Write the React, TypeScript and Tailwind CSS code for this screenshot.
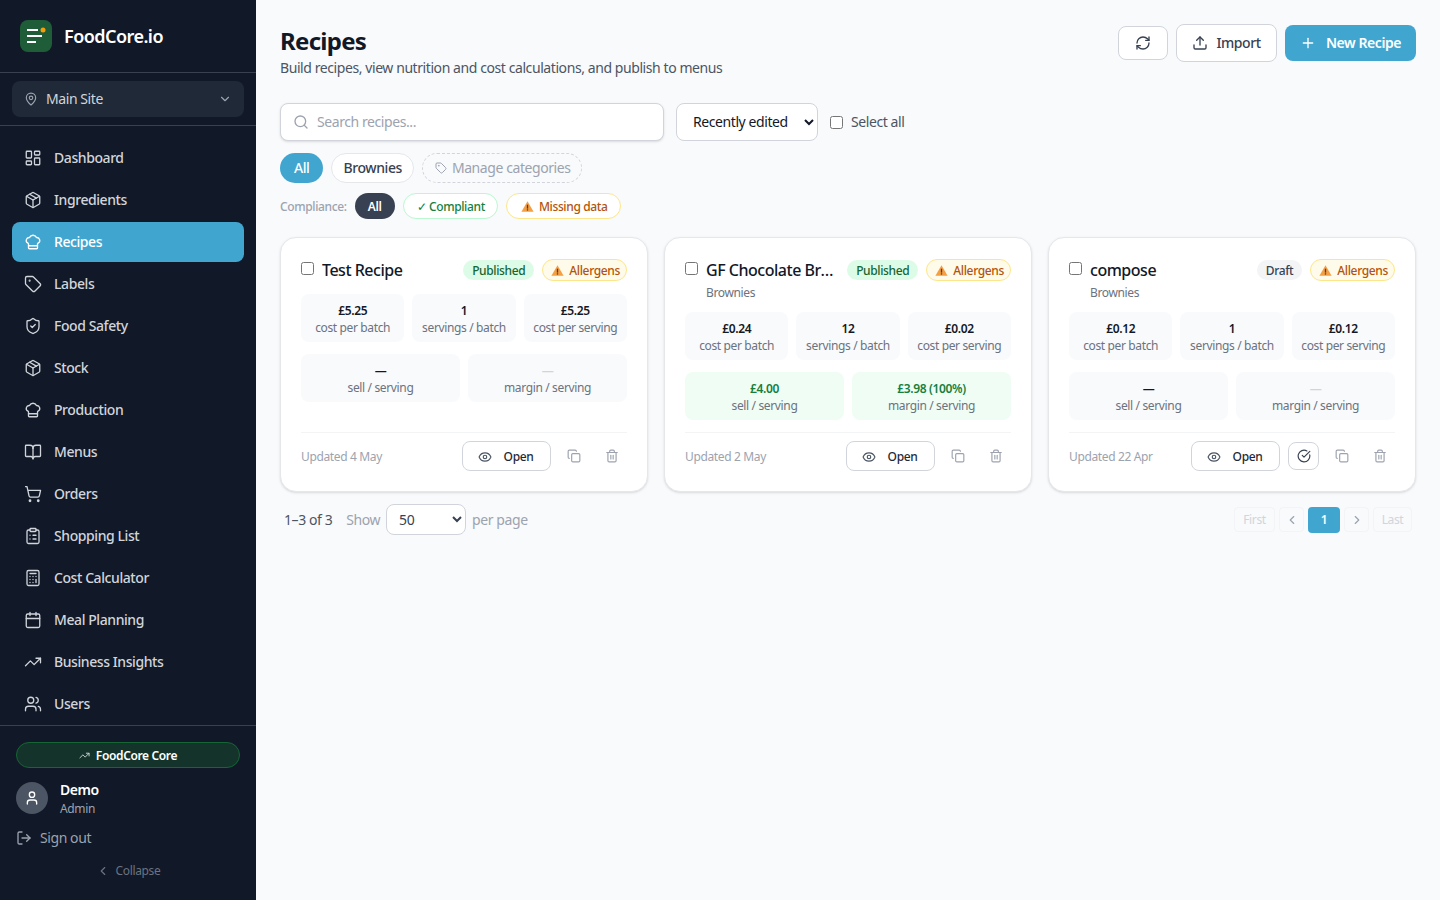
/**
 * Recipes Page - sidebar, filters and recipe cards
 */

import {
  BookOpen,
  Calculator,
  Calendar,
  ChefHat,
  ChevronDown,
  ChevronLeft,
  ChevronRight,
  CircleCheckBig,
  ClipboardList,
  Copy,
  Eye,
  LayoutDashboard,
  LogOut,
  MapPin,
  Package,
  Plus,
  RefreshCw,
  Search,
  ShieldCheck,
  ShoppingCart,
  Tag,
  Trash2,
  TrendingUp,
  Upload,
  User,
  Users,
} from 'lucide-react';

const navItems = [
  { label: 'Dashboard', icon: LayoutDashboard },
  { label: 'Ingredients', icon: Package },
  { label: 'Recipes', icon: ChefHat, active: true },
  { label: 'Labels', icon: Tag },
  { label: 'Food Safety', icon: ShieldCheck },
  { label: 'Stock', icon: Package },
  { label: 'Production', icon: ChefHat },
  { label: 'Menus', icon: BookOpen },
  { label: 'Orders', icon: ShoppingCart },
  { label: 'Shopping List', icon: ClipboardList },
  { label: 'Cost Calculator', icon: Calculator },
  { label: 'Meal Planning', icon: Calendar },
  { label: 'Business Insights', icon: TrendingUp },
  { label: 'Users', icon: Users },
];

const recipes = [
  {
    name: 'Test Recipe',
    status: 'Published',
    stats: [
      ['£5.25', 'cost per batch'],
      ['1', 'servings / batch'],
      ['£5.25', 'cost per serving'],
    ],
    updated: 'Updated 4 May',
  },
  {
    name: 'GF Chocolate Brownies',
    category: 'Brownies',
    status: 'Published',
    stats: [
      ['£0.24', 'cost per batch'],
      ['12', 'servings / batch'],
      ['£0.02', 'cost per serving'],
    ],
    sell: '£4.00',
    margin: '£3.98 (100%)',
    updated: 'Updated 2 May',
  },
  {
    name: 'compose',
    category: 'Brownies',
    status: 'Draft',
    stats: [
      ['£0.12', 'cost per batch'],
      ['1', 'servings / batch'],
      ['£0.12', 'cost per serving'],
    ],
    updated: 'Updated 22 Apr',
    canPublish: true,
  },
];

function WarningIcon() {
  return (
    <svg width="13" height="13" viewBox="0 0 16 16" className="shrink-0">
      <path d="M8 1.5 15.5 14.5H.5Z" fill="#f59e42" />
      <rect x="7.2" y="5.8" width="1.6" height="4.8" fill="#3f3f46" />
      <rect x="7.2" y="11.4" width="1.6" height="1.6" fill="#3f3f46" />
    </svg>
  );
}

function Logo() {
  return (
    <div className="flex h-8 w-8 items-center justify-center rounded-lg bg-[#1f5c38]">
      <svg width="32" height="32" viewBox="0 0 32 32">
        <rect x="7" y="9" width="11" height="2" fill="#fff" />
        <rect x="7" y="15" width="15" height="2" fill="#fff" />
        <rect x="7" y="21" width="9" height="2" fill="#fff" />
        <circle cx="23" cy="10" r="2.5" fill="#f59e0b" />
      </svg>
    </div>
  );
}

function Sidebar() {
  return (
    <aside className="flex h-screen w-64 shrink-0 flex-col bg-[#111827]">
      <div className="flex h-[73px] items-center gap-3 border-b border-[#374151] px-5 pb-[1px]">
        <Logo />
        <span className="text-lg font-semibold text-white">FoodCore.io</span>
      </div>

      {/* Site picker */}
      <div className="flex h-[53px] items-center border-b border-[#374151] px-3">
        <div className="flex h-9 w-full items-center gap-2 rounded-lg bg-[#1f2937] px-3 text-sm text-[#d1d5db]">
          <MapPin size={14} className="text-[#9ca3af]" />
          <span className="flex-1">Main Site</span>
          <ChevronDown size={14} className="text-[#9ca3af]" />
        </div>
      </div>

      <nav className="flex flex-col gap-0.5 px-3 pt-3">
        {navItems.map((item) => {
          const Icon = item.icon;
          return (
            <div
              key={item.label}
              className={`flex h-10 items-center gap-3 rounded-lg px-3 text-sm font-medium ${
                item.active ? 'bg-[#40a6d0] text-white' : 'text-[#d1d5db]'
              }`}
            >
              <Icon size={18} strokeWidth={1.75} />
              {item.label}
            </div>
          );
        })}
      </nav>

      <div className="mt-[1px] border-t border-[#374151] px-4 pt-4">
        <div className="flex h-[26px] items-center justify-center gap-1.5 rounded-full border border-[#166534] bg-[#14342b] pt-px text-xs font-semibold text-white">
          <TrendingUp size={11} className="text-[#d1d5db]" />
          FoodCore Core
        </div>

        <div className="mt-3.5 flex h-8 items-center gap-3">
          <div className="flex h-8 w-8 items-center justify-center rounded-full bg-[#4b5563] text-white">
            <User size={16} />
          </div>
          <div className="h-8">
            <div className="text-sm leading-4 font-semibold text-white">Demo</div>
            <div className="mt-[2px] pt-px text-xs leading-4 text-[#9ca3af]">Admin</div>
          </div>
        </div>

        <div className="mt-3.5 flex h-5 items-center gap-2 text-sm text-[#9ca3af]">
          <LogOut size={16} />
          Sign out
        </div>

        <div className="mt-3.5 flex h-4 items-center justify-center gap-1.5 pt-px text-xs text-[#6b7280]">
          <ChevronLeft size={14} />
          Collapse
        </div>
      </div>
    </aside>
  );
}

function Tile({ value, label, green, muted }: { value: string; label: string; green?: boolean; muted?: boolean }) {
  return (
    <div className={`h-12 rounded-lg pt-[9px] text-center text-xs leading-4 ${green ? 'bg-[#f0fdf4]' : 'bg-[#f9fafb]'}`}>
      <div
        className={`font-semibold ${
          green ? 'text-[#15803d]' : muted ? 'font-normal text-[#d1d5db]' : 'text-[#111827]'
        }`}
      >
        {value}
      </div>
      <div className="mt-px text-[#6b7280]">{label}</div>
    </div>
  );
}

function RecipeCard({ recipe }: { recipe: (typeof recipes)[number] }) {
  const priced = Boolean(recipe.sell);
  return (
    <div className="flex flex-col rounded-2xl border border-[#e5e7eb] bg-white p-5 shadow-sm">
      <div className="flex items-start">
        <input type="checkbox" className="mt-[4px] h-[13px] w-[13px] shrink-0" />
        <div className="ml-2 min-w-0 flex-1 truncate text-base leading-6 font-medium text-[#111827]">
          {recipe.name}
        </div>
        <div className="ml-3 flex shrink-0 items-center gap-2 pt-[1px]">
          <span
            className={`flex h-5 items-center rounded-full px-[9px] pt-px text-xs font-medium ${
              recipe.status === 'Published' ? 'bg-[#dcfce7] text-[#166534]' : 'bg-[#f3f4f6] text-[#374151]'
            }`}
          >
            {recipe.status}
          </span>
          <span className="flex h-[22px] items-center gap-[5px] rounded-full border border-[#fde68a] bg-[#fffbeb] pt-px pr-1.5 pl-2 text-xs font-medium text-[#b45309]">
            <WarningIcon />
            Allergens
          </span>
        </div>
      </div>

      {recipe.category && <div className="mt-[3px] h-[16px] pl-[21px] text-xs leading-4 text-[#6b7280]">{recipe.category}</div>}

      <div className={`${recipe.category ? 'mt-[11px]' : 'mt-3'} grid grid-cols-3 gap-2`}>
        {recipe.stats.map(([value, label]) => (
          <Tile key={label} value={value} label={label} />
        ))}
      </div>

      <div className="mt-3 grid grid-cols-2 gap-2">
        <Tile value={recipe.sell ?? '—'} label="sell / serving" green={priced} />
        <Tile value={recipe.margin ?? '—'} label="margin / serving" green={priced} muted={!priced} />
      </div>

      {/* Footer actions */}
      <div className="mt-auto flex items-center border-t border-[#f3f4f6] pt-2">
        <span className="flex-1 pt-px text-xs text-[#9ca3af]">{recipe.updated}</span>
        <button className="flex h-[30px] w-[89px] items-center justify-center gap-3 rounded-lg border border-[#d1d5db] bg-white pt-px pr-0.5 text-xs font-medium text-[#1f2937]">
          <Eye size={14} className="text-[#4b5563]" />
          Open
        </button>
        {recipe.canPublish && (
          <button className="ml-2 flex h-7 w-[31px] items-center justify-center rounded-lg border border-[#d1d5db] text-[#374151]">
            <CircleCheckBig size={14} />
          </button>
        )}
        <div className="ml-2 flex h-[30px] w-[30px] items-center justify-center text-[#9ca3af]">
          <Copy size={14} />
        </div>
        <div className="ml-2 flex h-[30px] w-[30px] items-center justify-center text-[#9ca3af]">
          <Trash2 size={14} />
        </div>
      </div>
    </div>
  );
}

function Pager() {
  const box = 'flex h-[25px] items-center justify-center rounded border border-[#f3f4f6] pt-px text-xs text-[#d1d5db]';
  return (
    <div className="flex items-center gap-1">
      <span className={`${box} w-[41px]`}>First</span>
      <span className={`${box} w-[25px]`}>
        <ChevronLeft size={14} className="text-[#9ca3af]" />
      </span>
      <span className="flex h-[26px] w-8 items-center justify-center rounded bg-[#40a6d0] pt-px text-xs font-semibold text-white">1</span>
      <span className={`${box} w-[25px]`}>
        <ChevronRight size={14} className="text-[#9ca3af]" />
      </span>
      <span className={`${box} w-[39px]`}>Last</span>
    </div>
  );
}

export default function App() {
  return (
    <div className="flex min-h-screen bg-[#f8fafc] font-['Noto_Sans',sans-serif] [&_*]:tracking-[-0.03em]">
      <Sidebar />

      <main className="flex-1 px-6 pt-6">
        <div className="flex items-start justify-between">
          <div>
            <h1 className="text-2xl leading-[34px] font-bold text-[#111827]">Recipes</h1>
            <p className="text-sm leading-5 text-[#4b5563]">Build recipes, view nutrition and cost calculations, and publish to menus</p>
          </div>
          <div className="flex h-[38px] items-center gap-2">
            <button className="flex h-[34px] w-[50px] items-center justify-center rounded-lg border border-[#d1d5db] bg-white text-[#374151]">
              <RefreshCw size={16} />
            </button>
            <button className="flex h-[38px] w-[101px] items-center justify-center gap-2 rounded-lg border border-[#d1d5db] bg-white text-sm font-medium text-[#374151]">
              <Upload size={16} />
              Import
            </button>
            <button className="flex h-9 w-[131px] items-center justify-center gap-2.5 rounded-lg bg-[#40a6d0] text-sm font-semibold text-white">
              <Plus size={16} />
              New Recipe
            </button>
          </div>
        </div>

        {/* Search and sort */}
        <div className="mt-[25px] flex items-center gap-3">
          <div className="flex h-[38px] w-[384px] items-center gap-2 rounded-lg border border-[#d1d5db] bg-white px-3 shadow-sm">
            <Search size={16} className="shrink-0 text-[#9ca3af]" />
            <input placeholder="Search recipes..." className="w-full text-sm outline-none placeholder:text-[#9ca3af]" />
          </div>
          <select
            defaultValue="edited"
            className="h-[38px] w-[142px] rounded-lg border border-[#d1d5db] bg-white pb-px pl-3 text-sm text-[#111827]"
          >
            <option value="edited">Recently edited</option>
          </select>
          <label className="flex items-center gap-2 text-sm text-[#4b5563]">
            <input type="checkbox" className="h-[13px] w-[13px]" />
            Select all
          </label>
        </div>

        {/* Category pills */}
        <div className="mt-3 flex items-center gap-2">
          <span className="flex h-[30px] items-center rounded-full bg-[#40a6d0] px-3.5 text-sm font-medium text-white">All</span>
          <span className="flex h-[30px] items-center rounded-full border border-[#e5e7eb] bg-white px-[11px] text-sm font-medium text-[#374151]">Brownies</span>
          <span className="flex h-[30px] items-center gap-[5px] rounded-full border border-dashed border-[#d1d5db] pr-[10px] pl-3 text-sm text-[#9ca3af]">
            <Tag size={12} />
            Manage categories
          </span>
        </div>

        {/* Compliance filter */}
        <div className="mt-2.5 flex items-center gap-2">
          <span className="pt-px text-xs font-medium text-[#9ca3af]">Compliance:</span>
          <span className="flex h-[26px] items-center rounded-full bg-[#374151] px-[13px] pt-px text-xs font-semibold text-white">All</span>
          <span className="flex h-[26px] items-center rounded-full border border-[#bbf7d0] bg-white pt-px pr-3 pl-[13px] text-xs font-medium text-[#15803d]">✓ Compliant</span>
          <span className="flex h-[26px] items-center gap-[5px] rounded-full border border-[#fde68a] bg-white pt-px pr-3 pl-3.5 text-xs font-medium text-[#b45309]">
            <WarningIcon />
            Missing data
          </span>
        </div>

        <div className="mt-[18px] grid h-[255px] grid-cols-3 gap-4">
          {recipes.map((recipe) => (
            <RecipeCard key={recipe.name} recipe={recipe} />
          ))}
        </div>

        <div className="mt-3 flex items-center justify-between px-1">
          <div className="flex items-center gap-1.5 text-sm">
            <span className="mr-2 text-[#4b5563]">1–3 of 3</span>
            <span className="text-[#9ca3af]">Show</span>
            <select defaultValue="50" className="h-[31px] w-20 rounded-lg border border-[#d1d5db] bg-white pl-2 text-sm text-[#374151]">
              <option value="50">50</option>
            </select>
            <span className="text-[#9ca3af]">per page</span>
          </div>
          <Pager />
        </div>
      </main>
    </div>
  );
}
